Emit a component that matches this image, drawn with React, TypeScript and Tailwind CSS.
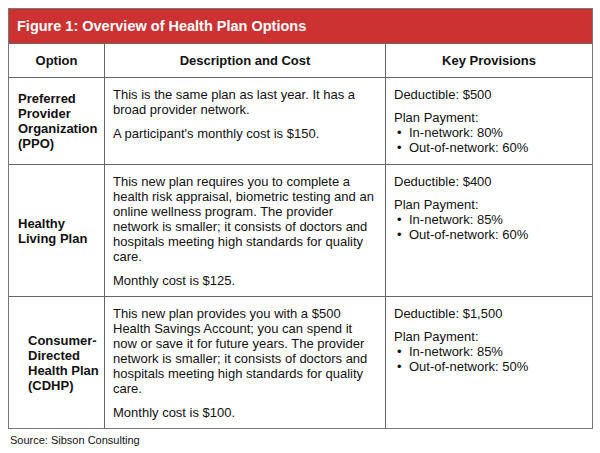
import React from "react";

const font = { fontFamily: '"Liberation Sans", Arial, sans-serif' };

const Bullets = ({ items }: { items: string[] }) => (
  <ul>
    {items.map((t) => (
      <li key={t} className="flex">
        <span className="w-[15px] pl-[3px]">•</span>
        <span>{t}</span>
      </li>
    ))}
  </ul>
);

const Provisions = ({ deductible, inNet, outNet }: { deductible: string; inNet: string; outNet: string }) => (
  <div className="space-y-[8px]">
    <p>Deductible: {deductible}</p>
    <div>
      <p>Plan Payment:</p>
      <Bullets items={[`In-network: ${inNet}`, `Out-of-network: ${outNet}`]} />
    </div>
  </div>
);

const rows = [
  {
    name: ["Preferred", "Provider", "Organization", "(PPO)"],
    indent: "pl-[9px]",
    height: "h-[87px]",
    desc: [
      ["This is the same plan as last year. It has a", "broad provider network."],
      ["A participant's monthly cost is $150."],
    ],
    prov: { deductible: "$500", inNet: "80%", outNet: "60%" },
  },
  {
    name: ["Healthy", "Living Plan"],
    indent: "pl-[9px]",
    height: "h-[132px]",
    desc: [
      [
        "This new plan requires you to complete a",
        "health risk appraisal, biometric testing and an",
        "online wellness program. The provider",
        "network is smaller; it consists of doctors and",
        "hospitals meeting high standards for quality",
        "care.",
      ],
      ["Monthly cost is $125."],
    ],
    prov: { deductible: "$400", inNet: "85%", outNet: "60%" },
  },
  {
    name: ["Consumer-", "Directed", "Health Plan", "(CDHP)"],
    indent: "pl-[19px]",
    height: "h-[131px]",
    desc: [
      [
        "This new plan provides you with a $500",
        "Health Savings Account; you can spend it",
        "now or save it for future years. The provider",
        "network is smaller; it consists of doctors and",
        "hospitals meeting high standards for quality",
        "care.",
      ],
      ["Monthly cost is $100."],
    ],
    prov: { deductible: "$1,500", inNet: "85%", outNet: "50%" },
  },
];

export default function App() {
  return (
    <div className="w-[600px] h-[453px] bg-white pt-[8px] pl-[8px] text-[13px] leading-[15px] text-[#111]" style={font}>
      <div className="w-[585px] border border-[#777]">
        <div className="h-[35px] bg-[#cc3232] border-b border-[#666] pl-[8px] flex items-center">
          <h2 className="text-white font-bold text-[14.5px] leading-[18px]">Figure 1: Overview of Health Plan Options</h2>
        </div>

        <div className="grid grid-cols-[96px_281px_1fr] h-[34px] border-b border-[#666] font-bold">
          <div className="border-r border-[#666] flex items-center justify-center">Option</div>
          <div className="border-r border-[#666] flex items-center justify-center">Description and Cost</div>
          <div className="flex items-center justify-center">Key Provisions</div>
        </div>

        {rows.map((r, i) => (
          <div
            key={i}
            className={`grid grid-cols-[96px_281px_1fr] ${r.height} ${i < rows.length - 1 ? "border-b border-[#666]" : ""}`}
          >
            <div className={`border-r border-[#666] flex flex-col justify-center font-bold ${r.indent}`}>
              {r.name.map((n) => (
                <span key={n}>{n}</span>
              ))}
            </div>
            <div className="border-r border-[#666] pt-[9px] pl-[8px] space-y-[9px]">
              {r.desc.map((p, j) => (
                <p key={j}>
                  {p.map((line) => (
                    <span key={line} className="block whitespace-nowrap">
                      {line}
                    </span>
                  ))}
                </p>
              ))}
            </div>
            <div className="pt-[9px] pl-[8px]">
              <Provisions {...r.prov} />
            </div>
          </div>
        ))}
      </div>
      <p className="mt-[5px] pl-[2px] text-[11px] leading-[13px]">Source: Sibson Consulting</p>
    </div>
  );
}
